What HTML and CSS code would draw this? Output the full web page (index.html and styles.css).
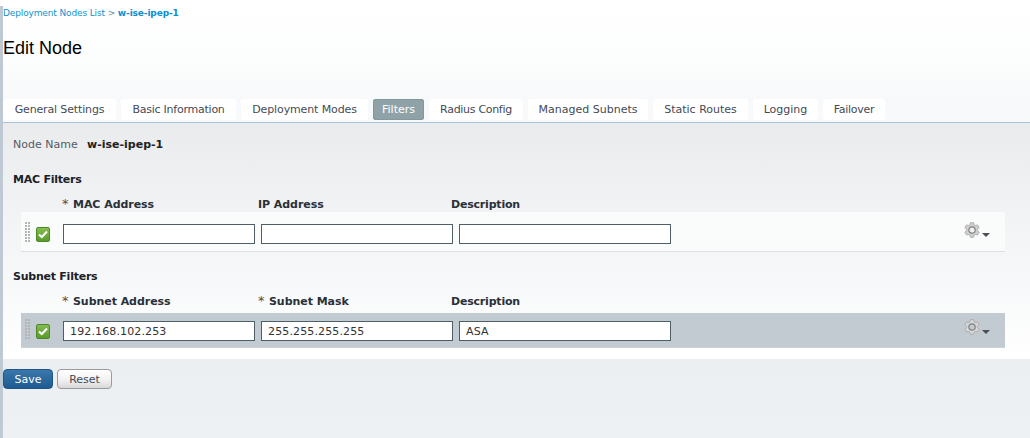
FILE: index.html
```html
<!DOCTYPE html>
<html>
<head>
<meta charset="utf-8">
<title>Edit Node</title>
<link rel="stylesheet" href="styles.css">
</head>
<body>
<div class="page">
  <header class="head">
    <div class="crumbs"><a class="crumb-link">Deployment Nodes List</a> <span class="crumb-sep">&gt;</span> <b class="crumb-cur">w-ise-ipep-1</b></div>
    <h1 class="title">Edit Node</h1>
  </header>
  <nav class="tabs">
    <div class="tab">General Settings</div>
    <div class="tab">Basic Information</div>
    <div class="tab">Deployment Modes</div>
    <div class="tab tab-active">Filters</div>
    <div class="tab">Radius Config</div>
    <div class="tab">Managed Subnets</div>
    <div class="tab">Static Routes</div>
    <div class="tab">Logging</div>
    <div class="tab">Failover</div>
  </nav>
  <main class="panel">
    <div class="node"><span class="node-label">Node Name</span><b class="node-value">w-ise-ipep-1</b></div>

    <h2 class="section section-mac">MAC Filters</h2>
    <div class="cols">
      <div class="col col-a"><span class="star">*</span>MAC Address</div>
      <div class="col col-b">IP Address</div>
      <div class="col col-c">Description</div>
    </div>
    <div class="row row-light">
      <div class="handle"></div>
      <div class="check"><svg width="10" height="9" viewBox="0 0 10 9"><path d="M1 4.5 L3.8 7 L9 1.5" fill="none" stroke="#fff" stroke-width="2"/></svg></div>
      <input class="field f1" type="text">
      <input class="field f2" type="text">
      <input class="field f3" type="text">
      <div class="actions">
        <svg class="gear" width="16" height="16" viewBox="0 0 16 16"><path d="M6.44 .66L9.56 .66L10.24 2.98L11.23 3.55L13.57 2.98L15.13 5.68L13.47 7.43L13.47 8.57L15.13 10.32L13.57 13.02L11.23 12.45L10.24 13.02L9.56 15.34L6.44 15.34L5.76 13.02L4.77 12.45L2.43 13.02L.87 10.32L2.53 8.57L2.53 7.43L.87 5.68L2.43 2.98L4.77 3.55L5.76 2.98Z" fill="#cfcfcf" stroke="#a5a5a5" stroke-width=".8"/><circle cx="8" cy="8" r="3.2" fill="#f0f0f0" stroke="#808080" stroke-width="1.2"/></svg>
        <span class="caret"></span>
      </div>
    </div>

    <h2 class="section section-subnet">Subnet Filters</h2>
    <div class="cols">
      <div class="col col-a"><span class="star">*</span>Subnet Address</div>
      <div class="col col-b"><span class="star">*</span>Subnet Mask</div>
      <div class="col col-c">Description</div>
    </div>
    <div class="row row-dark">
      <div class="handle"></div>
      <div class="check"><svg width="10" height="9" viewBox="0 0 10 9"><path d="M1 4.5 L3.8 7 L9 1.5" fill="none" stroke="#fff" stroke-width="2"/></svg></div>
      <input class="field f1" type="text" value="192.168.102.253">
      <input class="field f2" type="text" value="255.255.255.255">
      <input class="field f3" type="text" value="ASA">
      <div class="actions">
        <svg class="gear" width="16" height="16" viewBox="0 0 16 16"><path d="M6.44 .66L9.56 .66L10.24 2.98L11.23 3.55L13.57 2.98L15.13 5.68L13.47 7.43L13.47 8.57L15.13 10.32L13.57 13.02L11.23 12.45L10.24 13.02L9.56 15.34L6.44 15.34L5.76 13.02L4.77 12.45L2.43 13.02L.87 10.32L2.53 8.57L2.53 7.43L.87 5.68L2.43 2.98L4.77 3.55L5.76 2.98Z" fill="#d8d8d8" stroke="#a5a5a5" stroke-width=".8"/><circle cx="8" cy="8" r="3.2" fill="#c3cbd2" stroke="#808080" stroke-width="1.2"/></svg>
        <span class="caret"></span>
      </div>
    </div>
  </main>
  <footer class="foot">
    <button class="btn btn-save" type="button">Save</button>
    <button class="btn btn-reset" type="button">Reset</button>
  </footer>
</div>
</body>
</html>
```
FILE: styles.css
```css
* { box-sizing: border-box; }
html, body { margin: 0; height: 100%; background: #fff; overflow: hidden; }
body {
  padding-top: 6px;
  font-family: "DejaVu Sans", sans-serif;
  font-size: 11px;
  color: #333;
}
.page {
  height: 432px;
  border-left: 3px solid #bfc9d3;
  background: #ebeff2;
  display: flex;
  flex-direction: column;
}
.head {
  height: 93px;
  background: linear-gradient(#fff, #fcfdfd 60%, #f7f9fa);
}
.crumbs {
  font-size: 9px;
  line-height: 14px;
  letter-spacing: -0.13px;
  color: #0b94d2;
}
.crumb-sep { color: #5a8fa8; }
.crumb-cur { color: #0a90d0; }
.title {
  margin: 18px 0 0;
  font-family: "Liberation Sans", sans-serif;
  font-size: 18px;
  font-weight: 400;
  line-height: 20px;
  color: #000;
}
.tabs {
  display: flex;
  height: 24px;
  gap: 5px;
  padding-bottom: 2px;
  background: #f7f9fa;
  border-bottom: 1px solid #a9c1d2;
}
.tab {
  height: 21px;
  display: flex;
  align-items: center;
  justify-content: center;
  background: #fff;
  border-radius: 3px;
  color: #444a55;
  white-space: nowrap;
  font-size: 11px;
}
.tab:nth-child(1) { width: 113px; letter-spacing: -0.14px; }
.tab:nth-child(2) { width: 115px; letter-spacing: -0.24px; }
.tab:nth-child(3) { width: 127px; letter-spacing: -0.12px; }
.tab:nth-child(4) { width: 51px; }
.tab:nth-child(5) { width: 94px; letter-spacing: -0.3px; }
.tab:nth-child(6) { width: 120px; }
.tab:nth-child(7) { width: 95px; }
.tab:nth-child(8) { width: 65px; }
.tab:nth-child(9) { width: 62px; letter-spacing: -0.3px; }
.tab-active {
  background: #8ea2a8;
  color: #fff;
  box-shadow: inset 0 0 0 1px #84979d;
}
.panel {
  height: 236px;
  padding: 15px 0 0 10px;
  background: linear-gradient(#e9ebed, #f4f6f7 55%, #fff);
}
.node { line-height: 14px; display: flex; }
.node-label { color: #555b66; width: 74px; }
.node-value { color: #222; font-size: 11px; }
.section {
  margin: 0;
  font-size: 11px;
  font-weight: 700;
  line-height: 14px;
  letter-spacing: -0.24px;
  color: #1c2128;
}
.section-mac { margin-top: 21px; }
.section-subnet { margin-top: 18px; }
.cols {
  display: flex;
  margin-top: 11px;
  height: 14px;
  line-height: 14px;
  font-weight: 700;
  font-size: 11px;
  letter-spacing: -0.05px;
  color: #2a3038;
}
.col { white-space: nowrap; }
.col-a { width: 196px; margin-left: 49px; }
.col-b { width: 193px; }
.col-c { letter-spacing: -0.2px; }
.star {
  display: inline-block;
  width: 11px;
  font-size: 13px;
  line-height: 12px;
  color: #5a4a44;
  font-weight: 400;
}
.row {
  display: flex;
  width: 984px;
  margin-left: 8px;
  align-items: flex-start;
}
.row-light {
  height: 40px;
  background: #fafbfb;
  border-bottom: 1px solid #dcdfe0;
}
.row-dark {
  height: 35px;
  margin-top: 4px;
  background: #c3cbd2;
  border-bottom: 1px solid #ccd3d8;
}
.handle {
  width: 6px;
  height: 20px;
  margin: 10px 0 0 4px;
  background-image: radial-gradient(circle at 1px 1px, #b4b4b4 1.1px, transparent 1.2px);
  background-size: 3px 3px;
}
.row-dark .handle { margin-top: 6px; }
.check {
  width: 14px;
  height: 15px;
  margin: 15px 13px 0 5px;
  background: linear-gradient(#84bc50, #5b9a2c);
  border: 1px solid #4d8a24;
  border-radius: 2px;
  display: flex;
  align-items: center;
  justify-content: center;
}
.row-dark .check { margin-top: 11px; }
.field {
  height: 20px;
  margin: 12px 6px 0 0;
  padding: 1px 6px 0;
  border: 1px solid #4f5f66;
  background: #fff;
  font-family: "DejaVu Sans", sans-serif;
  font-size: 11px;
  letter-spacing: 0.13px;
  color: #333;
  outline: none;
}
.row-dark .field { margin-top: 8px; }
.f1, .f2 { width: 192px; }
.f3 { width: 212px; margin-right: 0; }
.actions {
  margin: 10px 0 0 293px;
  display: flex;
  align-items: flex-end;
  height: 16px;
}
.row-dark .actions { margin-top: 6px; }
.caret {
  width: 0;
  height: 0;
  margin: 0 0 1px 2px;
  border-left: 4px solid transparent;
  border-right: 4px solid transparent;
  border-top: 4px solid #4a4f55;
}
.foot {
  display: flex;
  gap: 4px;
  padding-top: 10px;
  background: linear-gradient(#ebeff2, #eef1f3);
  flex: 1;
  align-items: flex-start;
}
.btn {
  height: 20px;
  padding: 0;
  font-family: "DejaVu Sans", sans-serif;
  font-size: 11px;
  border-radius: 4px;
}
.btn-save {
  width: 50px;
  color: #fff;
  background: linear-gradient(#3a78ac, #1d5a90);
  border: 1px solid #1f5687;
}
.btn-reset {
  width: 55px;
  color: #444a55;
  background: linear-gradient(#fff, #f3f3f3 50%, #d9d9d9);
  border: 1px solid #9a9a9a;
}
```
